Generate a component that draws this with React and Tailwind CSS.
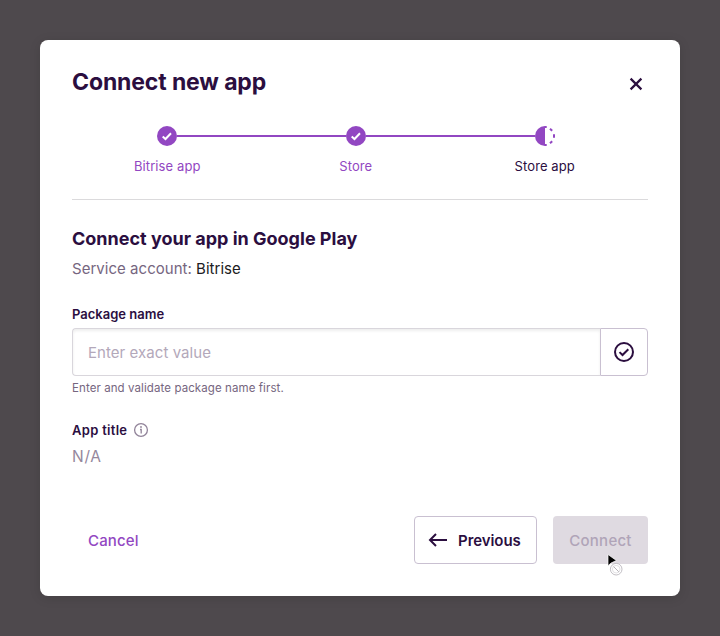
const CheckDot = () => (
  <svg className="block size-5" viewBox="0 0 20 20" fill="none">
    <circle cx="10" cy="10" r="10" fill="#9247C2" />
    <path d="M5.7 10.4 8.5 13 14 7.2" stroke="#fff" strokeWidth="2" />
  </svg>
);

const HalfDot = () => (
  <svg className="ml-px block size-5" viewBox="0 0 20 20" fill="none" stroke="#9247C2" strokeWidth="2">
    <path d="M10 0a10 10 0 0 0 0 20z" fill="#9247C2" stroke="none" />
    <path d="M10 1h1.7M10 19h1.7M15 2.7 17.2 4.7M19 8.2v3.6M15 17.3 17.2 15.3" />
  </svg>
);

function Step({ label, icon, active, first }) {
  return (
    <li className="relative flex w-[188.5px] flex-col items-center">
      {!first && <span className="absolute right-[104px] top-[9px] h-0.5 w-[169px] bg-[#9247C2]" />}
      {icon}
      <span className={`mt-[10px] whitespace-nowrap text-[13px] leading-5 tracking-[0.1px] ${active ? "pl-px text-[#2B0E3F]" : "text-[#9247C2]"}`}>{label}</span>
    </li>
  );
}

export default function App() {
  return (
    <main className="h-[636px] w-[720px] bg-[#4E494D] p-10 font-['Inter',sans-serif]">
      <section className="relative flex h-[556px] flex-col rounded-lg bg-white px-8 text-[#2B0E3F] shadow-[0_2px_12px_rgba(0,0,0,0.12)]">
        <header className="flex h-[86px] shrink-0 items-start justify-between pt-[26px]">
          <h1 className="whitespace-nowrap text-[23px] font-bold leading-8 tracking-[-0.12px]">Connect new app</h1>
          <button aria-label="Close" className="mt-[6px]">
            <svg className="size-6" viewBox="0 0 24 24" fill="none" stroke="#2B0E3F" strokeWidth="2.2">
              <path d="m6.6 6.6 10.8 10.8M17.4 6.6 6.6 17.4" />
            </svg>
          </button>
        </header>

        <ol className="flex h-[74px] shrink-0 border-b border-[#DBDADC] pl-px">
          <Step first label="Bitrise app" icon={<CheckDot />} />
          <Step label="Store" icon={<CheckDot />} />
          <Step active label="Store app" icon={<HalfDot />} />
        </ol>

        <h2 className="mt-[27px] whitespace-nowrap text-[18px] font-bold leading-6">Connect your app in Google Play</h2>
        <p className="mt-[6px] whitespace-nowrap text-[15px] leading-6 tracking-[0.03px] text-[#76667F]">
          Service account: <span className="text-[#201B22]">Bitrise</span>
        </p>

        <label className="mt-[23px] whitespace-nowrap text-[13px] font-semibold leading-5">Package name</label>
        <div className="mt-1 flex h-12 shrink-0">
          <input
            placeholder="Enter exact value"
            className="min-w-0 flex-1 rounded-l border border-r-0 border-[#D9D6DC] px-[15px] pt-0.5 text-[15px] tracking-[0.06px] shadow-[inset_0_2px_3px_rgba(0,0,0,0.07)] placeholder:text-[#B3A8BA]"
          />
          <button aria-label="Validate" className="flex w-12 items-center justify-center rounded-r border border-[#C9C0D1]">
            <svg className="size-6" viewBox="0 0 24 24" fill="none" stroke="#2B0E3F" strokeWidth="2">
              <circle cx="12" cy="12" r="9" />
              <path d="m7.5 12.1 3 2.9 5.8-5.8" />
            </svg>
          </button>
        </div>
        <p className="mt-1 whitespace-nowrap text-[11.5px] leading-4 tracking-[0.09px] text-[#76667F]">Enter and validate package name first.</p>

        <div className="mt-[24px] flex h-5 items-center">
          <span className="w-[55px] whitespace-nowrap text-[13px] font-semibold leading-5 tracking-[0.3px]">App title</span>
          <svg className="ml-[6px] size-4" viewBox="0 0 16 16" fill="none" stroke="#918399">
            <circle cx="8" cy="8" r="6.4" strokeWidth="1.3" />
            <path d="M7 7.5h1.2V11.5" strokeWidth="1.3" />
            <circle cx="8" cy="5" r=".9" fill="#918399" stroke="none" />
          </svg>
        </div>
        <p className="mt-[5px] text-[15.5px] leading-6 tracking-[0.7px] text-[#95879D]">N/A</p>

        <footer className="mt-[47px] flex h-12 shrink-0 items-center text-[15px] font-medium">
          <button className="ml-4 pt-0.5 tracking-[0.15px] text-[#9247C2]">Cancel</button>
          <button className="ml-auto flex h-12 w-[123px] items-center rounded border border-[#C9C0D1] pl-[11px]">
            <svg className="size-6 shrink-0" viewBox="0 0 24 24" fill="none" stroke="#2B0E3F" strokeWidth="2">
              <path d="M21 12H4M10 6l-6 6 6 6" />
            </svg>
            <span className="ml-2 pt-0.5 font-semibold tracking-[-0.05px]">Previous</span>
          </button>
          <button className="ml-4 h-12 w-[95px] rounded bg-[#DFDAE1] pt-0.5 tracking-[0.25px] text-[#B0A4B8]">Connect</button>
        </footer>

        <svg className="absolute left-[566px] top-[513px] h-6 w-[18px]" viewBox="0 0 18 24" fill="none">
          <path d="M2 1.5v11.2l3-2.6 5.4-2.6z" fill="#000" stroke="#fff" strokeWidth=".7" />
          <circle cx="10.2" cy="16.2" r="5.8" fill="#fff" stroke="#BBB8BD" strokeWidth=".9" />
          <circle cx="10.2" cy="16.2" r="3.8" stroke="#D5D3D7" strokeWidth=".7" />
          <path d="m7.6 13.6 5.2 5.2" stroke="#B5B2B7" />
        </svg>
      </section>
    </main>
  );
}
